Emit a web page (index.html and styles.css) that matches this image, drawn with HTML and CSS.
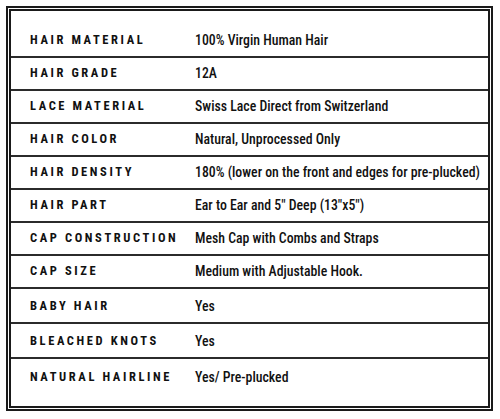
FILE: index.html
```html
<!DOCTYPE html>
<html lang="en">
<head>
  <meta charset="UTF-8">
  <meta name="viewport" content="width=device-width, initial-scale=1.0">
  <title>Hair Specs</title>
  <link rel="stylesheet" href="styles.css">
</head>
<body>
  <div class="frame">
    <div class="specs">
      <div class="spec-row">
        <span class="label">Hair Material</span>
        <span class="value">100% Virgin Human Hair</span>
      </div>
      <div class="spec-row">
        <span class="label">Hair Grade</span>
        <span class="value">12A</span>
      </div>
      <div class="spec-row">
        <span class="label">Lace Material</span>
        <span class="value">Swiss Lace Direct from Switzerland</span>
      </div>
      <div class="spec-row">
        <span class="label">Hair Color</span>
        <span class="value">Natural, Unprocessed Only</span>
      </div>
      <div class="spec-row">
        <span class="label">Hair Density</span>
        <span class="value">180% (lower on the front and edges for pre-plucked)</span>
      </div>
      <div class="spec-row">
        <span class="label">Hair Part</span>
        <span class="value">Ear to Ear and 5" Deep (13"x5")</span>
      </div>
      <div class="spec-row">
        <span class="label">Cap Construction</span>
        <span class="value">Mesh Cap with Combs and Straps</span>
      </div>
      <div class="spec-row">
        <span class="label">Cap Size</span>
        <span class="value">Medium with Adjustable Hook.</span>
      </div>
      <div class="spec-row tall">
        <span class="label">Baby Hair</span>
        <span class="value">Yes</span>
      </div>
      <div class="spec-row tall">
        <span class="label">Bleached Knots</span>
        <span class="value">Yes</span>
      </div>
      <div class="spec-row tall last">
        <span class="label">Natural Hairline</span>
        <span class="value">Yes/ Pre-plucked</span>
      </div>
    </div>
  </div>
</body>
</html>
```
FILE: styles.css
```css
body {
  margin: 0;
  background-color: #fff;
  color: #111;
  font-family: "Roboto Condensed", "Liberation Sans", sans-serif;
}

.frame {
  margin: 6px 7px 0 6px;
  border: 2px solid #1a1a1a;
  padding: 1px;
}

.specs {
  border: 2px solid #1a1a1a;
  padding: 14px 0 12px;
}

.spec-row {
  display: grid;
  grid-template-columns: 165px 1fr;
  align-items: center;
  height: 33px;
  box-sizing: border-box;
  padding: 0 0 2px 19px;
  border-bottom: 2px solid #2b2b2b;
}

.spec-row.tall {
  height: 35px;
  padding-bottom: 0;
}

.spec-row.last {
  border-bottom: none;
}

.label {
  font-size: 12.5px;
  font-weight: bold;
  text-transform: uppercase;
  letter-spacing: 2.6px;
}

.value {
  font-size: 13.8px;
  font-weight: 500;
}
```
